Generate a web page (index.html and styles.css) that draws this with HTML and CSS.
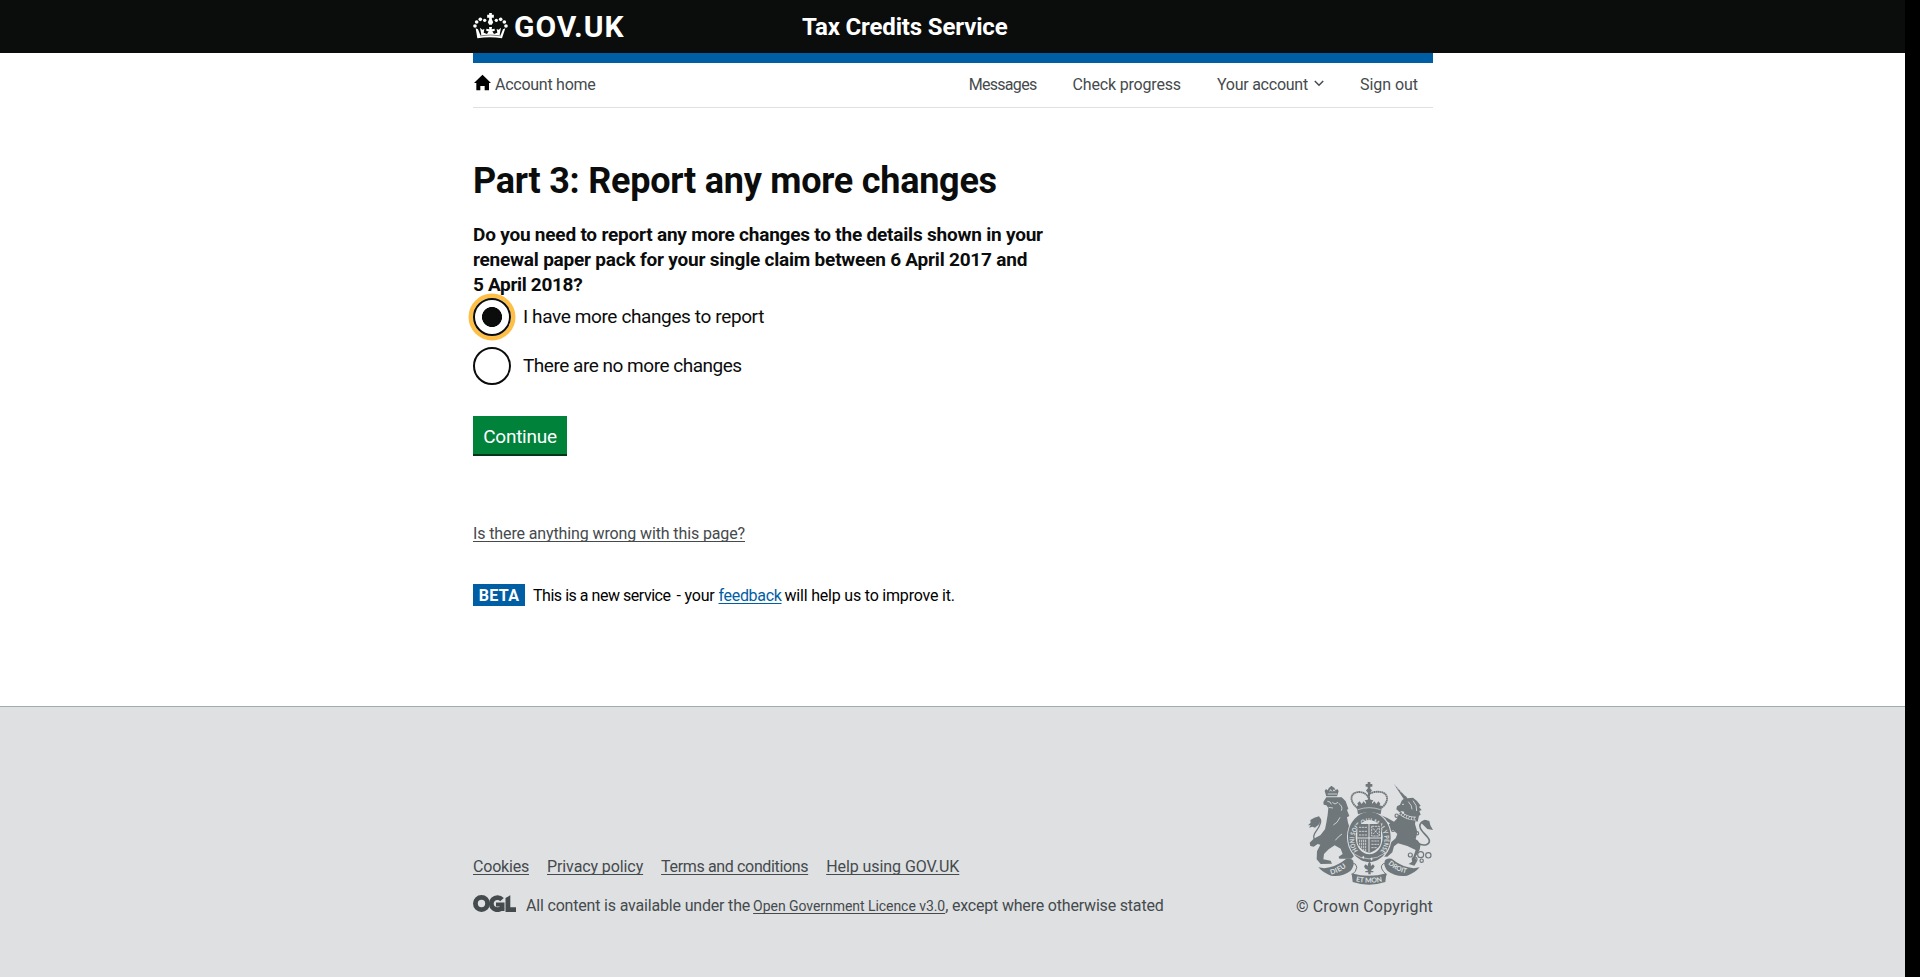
FILE: index.html
```html
<!DOCTYPE html>
<html lang="en">
<head>
<meta charset="utf-8">
<title>Report any more changes - Tax Credits Service - GOV.UK</title>
<link rel="stylesheet" href="styles.css">
</head>
<body>
<div class="page">
  <header class="header">
    <div class="wrap header-row">
      <a class="logo" href="#">
        <svg class="crown" viewBox="39 36 105 84" fill="#fff">
          <circle cx="45" cy="78" r="5.500"/><circle cx="50" cy="66" r="5.500"/><circle cx="61" cy="58" r="5.500"/><circle cx="74" cy="61" r="5"/>
          <circle cx="138" cy="78" r="5.500"/><circle cx="133" cy="66" r="5.500"/><circle cx="122" cy="58" r="5.500"/><circle cx="109" cy="61" r="5"/>
          <path d="M87.500 39h8v5h6v9h-6v5l4 9-4 7h-8l-4-7 4-9v-5h-6v-9h6z"/>
          <path d="M47 85l7 3 7 17 3-1-4-21 7 6 6-2-2 11 10 4 5-8-7-1v-7l9 2-1-7h9l-1 7 9-2v7l-7 1 5 8 10-4-2-11 6 2 7-6-4 21 3 1 7-17 7-3-10 30c-25-4-49-4-74 0z"/>
          <path d="M60 107.500q31-5 63 0" fill="none" stroke="#0b0c0c" stroke-width="1.500"/>
        </svg>
        <span class="logo-text">GOV.UK</span>
      </a>
      <a class="service" href="#">Tax Credits Service</a>
    </div>
  </header>
  <div class="wrap bar"></div>
  <nav class="wrap nav">
    <a class="home" href="#">
      <svg class="home-icon" viewBox="42 222 51 51"><path d="M67.500 224L93 249h-6v22H74v-13H61v13H49v-22h-7z"/></svg>
      <span class="t-home">Account home</span>
    </a>
    <ul class="nav-list">
      <li class="t-messages">Messages</li>
      <li class="t-check">Check progress</li>
      <li class="account"><span class="t-account">Your account</span><svg class="chev" viewBox="0 0 10 7"><path d="M.8 1L5 5.300 9.200 1" fill="none" stroke="#454a4d" stroke-width="1.500"/></svg></li>
      <li class="t-sign">Sign out</li>
    </ul>
  </nav>
  <main class="wrap main">
    <h1>Part 3: Report any more changes</h1>
    <p class="question">Do you need to report any more changes to the details shown in your<br>renewal paper pack for your single claim between 6 April 2017 and<br><span class="t-year">5 April 2018?</span></p>
    <label class="choice"><span class="radio selected"></span><span class="t-more">I have more changes to report</span></label>
    <label class="choice"><span class="radio"></span><span class="t-none">There are no more changes</span></label>
    <button class="button">Continue</button>
    <div class="problem"><a class="link" href="#">Is there anything wrong with this page?</a></div>
    <div class="phase"><strong class="tag">BETA</strong><span class="t-new">This is a new service</span><span class="t-your">- your</span><a class="link feedback" href="#">feedback</a><span class="t-help">will help us to improve it.</span></div>
  </main>
  <footer class="footer">
    <div class="wrap footer-row">
      <div class="meta">
        <ul class="links">
          <li><a class="link t-cookies" href="#">Cookies</a></li>
          <li><a class="link t-privacy" href="#">Privacy policy</a></li>
          <li><a class="link t-terms" href="#">Terms and conditions</a></li>
          <li><a class="link t-using" href="#">Help using GOV.UK</a></li>
        </ul>
        <div class="licence">
          <svg class="ogl" viewBox="0 0 43 17"><g fill="none" stroke="#454a4d" stroke-width="4.800"><circle cx="8.500" cy="8.500" r="6.100"/><path d="M29 4.600A6.100 6.100 0 1 0 29.500 12"/></g><path d="M23 7.500h8.500V16H28l-1-4.500h-4zM32.500 3L37.300.3V12.300H43V17H32.500z" fill="#454a4d"/></svg>
          <span class="t-content">All content is available under the</span>
          <a class="link small" href="#">Open Government Licence v3.0</a><span class="t-except">, except where otherwise stated</span>
        </div>
      </div>
      <div class="copyright">
        <svg class="arms" viewBox="84 33 375 315" fill="#6f777b">
          <defs>
            <path id="garter" d="M234 242A45 50 0 1 1 302 242"/>
            <path id="scroll-left" d="M153 314Q183 307 206 284"/>
            <path id="scroll-mid" d="M227 334Q267 343 309 334"/>
            <path id="scroll-right" d="M324 282Q350 306 386 311"/>
          </defs>
          <!-- lion -->
          <path d="M139 79l-5-16 4-6 5 4 4-8 5-3v-2h5v2l6 3 4 8 5-4 4 6-5 16z"/>
          <path d="M143 72h28M149 64l3-5 3 5M159 64l3-5 3 5" fill="none" stroke="#dee0e2" stroke-width="2.500"/>
          <path d="M119 219C98 208 97 200 108 184C122 165 127 148 116 145L107 149" fill="none" stroke="#6f777b" stroke-width="4"/>
          <path d="M84 166l8-8-1-8 12-7 14-4 6 9-5 14-13 11-8-3-10 3 5-7z"/>
          <path d="M139 82h46l12 12 8 22-4 4 7 18-7 4 3 16 4 12 14 6 10 10-4 14-12-6-10-6-4 10 2 14 8 16 4 18 6 12-8 8h-36l-2-6 12-8-6-16-18-10-18 12-14 14-2 16 22 4 4 9-34 1-12-14 1-24 10-20-8-2-12 8-10-2-2-10 12-12 20-10 14-18 4-20 4-24 2-20-6-8-8-2-1-8 6-10z"/>
          <path d="M142 94l8 2 4 7M157 97l8 5 9-5M146 112l13 2M176 100q14 10 8 22M180 142q-8 18-20 23M186 192q-13 9-20 19" fill="none" stroke="#dee0e2" stroke-width="2.500"/>
          <!-- unicorn -->
          <path d="M341 41L379 82l-8 5z"/>
          <path d="M344 45l4 6M352 54l4 5M360 63l4 5" stroke="#dee0e2" stroke-width="1.500"/>
          <path d="M349 118l2-9 9-5 5-12 8-7 4-8 5 8 17-2 12 10 11 14-5 4 8 9-7 3 4 11-5 3-4 18-45-15 5-15-7-1-7 3z"/>
          <path d="M366 103h6M385 95q12 13 11 23M399 92q13 14 11 31" fill="none" stroke="#dee0e2" stroke-width="2.500"/>
          <path d="M359 133l48 17-2 12 7 24-5 21 15 15-3 17-13 23 4 14-7 11-17-5 10-7 5-18 6-17-25-12-28-8-12 9-5 18-15 13-18-1 7-8 12-5 7-26 17-15 5-13-12-12-17 2-16 8-8 19-12 2 2-10 8-4 5-19 20-11 8-7-16-10-15-2-8-7 12-5 19 8 20 11 8-8z"/>
          <path d="M360 128q20 18 48 18" fill="none" stroke="#dee0e2" stroke-width="11"/>
          <path d="M360 128q20 18 48 18" fill="none" stroke="#6f777b" stroke-width="7" stroke-dasharray="6 2"/>
          <path d="M412 220C435 231 453 222 447 208C440 193 414 180 420 164Q427 151 440 153" fill="none" stroke="#6f777b" stroke-width="5"/>
          <path d="M424 160l10-11 14 4 3 13 8 14-17-3-12-12z"/>
          <g fill="none" stroke="#6f777b" stroke-width="3.500"><circle cx="391" cy="255" r="6"/><circle cx="404" cy="268" r="7"/><circle cx="422" cy="254" r="9"/><circle cx="445" cy="256" r="8"/><circle cx="425" cy="272" r="5"/><circle cx="350" cy="137" r="5"/><circle cx="339" cy="178" r="6"/><circle cx="411" cy="190" r="5"/><circle cx="408" cy="218" r="6"/></g>
          <!-- garter and shield -->
          <ellipse cx="268" cy="201" rx="67" ry="78" fill="#dee0e2"/>
          <path fill-rule="evenodd" d="M268 126C301 126 332 157 332 200S301 276 268 276 204 243 204 200 235 126 268 126zM268 150C248 150 227 171 227 201S246 253 268 253 308 231 308 201 288 150 268 150z"/>
          <g class="arms-text"><text font-size="20" textLength="222" lengthAdjust="spacingAndGlyphs"><textPath href="#garter">HONI SOIT QUI MAL Y PENSE</textPath></text></g>
          <path d="M232 162h71v51c0 20-21 31-35 36-15-5-36-16-36-36z"/>
          <path d="M267 162v86M232 204h71" stroke="#dee0e2" stroke-width="3"/>
          <path d="M237 172h24M237 184h24M237 195h24M275 169h23v29h-23zM279 175l16 18M295 174l-15 18M239 209v24M245 209v29M251 209v33M257 209v36M274 213h23M274 223h23M274 233h17" fill="none" stroke="#dee0e2" stroke-width="2.500" stroke-dasharray="7 2"/>
          <path d="M219 250q48 34 98-2" fill="none" stroke="#dee0e2" stroke-width="2"/>
          <path d="M250 257l3 5-3 5-4-5zM275 262l3 5-3 5-4-5z" fill="#dee0e2"/>
          <!-- crown -->
          <path d="M263 36h8v6h6v8h-6v6l5 5-5 7h-8l-5-7 5-5v-6h-6v-8h6z"/>
          <path d="M232 114C204 91 212 66 238 66Q256 67 263 79Q269 68 284 66C330 60 329 96 304 114" fill="none" stroke="#6f777b" stroke-width="5.500" stroke-dasharray="5 1"/>
          <path d="M267 67v35" fill="none" stroke="#6f777b" stroke-width="6" stroke-dasharray="5 1"/>
          <path d="M230 108q38-13 76 0l-4 25q-34-12-68 0z"/>
          <path d="M234 119q33-12 68 0" fill="none" stroke="#dee0e2" stroke-width="2"/>
          <path d="M236 109l-4-9 7-6 6 8 6-8 6 8-4 8zM256 107l2-10-4-6 9-2 4-8 5 8 8 2-4 6 2 10zM281 109l-4-8 6-7 6 8 6-8 6 7-5 9z"/>
          <!-- scroll -->
          <path d="M115 292q19 5 34 0 28-8 50-26 16-3 21 8 4 15-9 29-25 19-58 14-23-8-38-25z"/>
          <path d="M419 292q-18 5-34 0-28-8-50-26-17-3-21 8-4 15 9 29 25 19 58 14 24-8 38-25z"/>
          <path d="M205 291q10-14 21-9 9 8 0 22l-10 10 9 16q42 12 85 0l9-16-9-10q-12-15 0-23 11-4 21 8" fill="none" stroke="#6f777b" stroke-width="3"/>
          <path d="M215 310q52 15 104 0l-3 26q-49 16-98 0z"/>
          <path d="M265 279l3-4 4 4 1 9 6-5 5 6-5 8-5 2v4h6v4h-8v6h-7v-6h-9v-4h7v-4l-7-3-4-7 5-6 6 5z"/>
          <g class="arms-text"><text font-size="21" textLength="52"><textPath href="#scroll-left">DIEU</textPath></text><text font-size="21" textLength="81"><textPath href="#scroll-mid">ET MON</textPath></text><text font-size="20" textLength="62"><textPath href="#scroll-right">DROIT</textPath></text></g>
        </svg>
        <span class="t-copy">© Crown Copyright</span>
      </div>
    </div>
  </footer>
</div>
</body>
</html>
```
FILE: styles.css
```css
body { margin: 0; background: #000; font: 16px/20px Roboto, sans-serif; color: #0b0c0c; }
a { color: inherit; text-decoration: none; }
ul { margin: 0; padding: 0; list-style: none; display: flex; }
svg { display: block; flex: none; }
.page { width: 1905px; height: 977px; background: #fff; overflow: hidden; display: flex; flex-direction: column; }
.wrap { box-sizing: border-box; width: 960px; margin: 0 0 0 473px; white-space: nowrap; }

.header { background: #0b0c0c; height: 53px; flex: none; color: #fff; }
.header-row { display: grid; grid-template-columns: 329px 1fr; align-items: center; height: 53px; }
.logo { display: flex; align-items: center; gap: 6px; }
.crown { width: 35px; height: 28px; margin-top: -1px; }
.logo-text { font-size: 30px; font-weight: 700; line-height: 53px; letter-spacing: .95px; }
.service { font-size: 24px; font-weight: 700; letter-spacing: -.15px; }
.bar { height: 10px; background: #005ea5; flex: none; }

.nav { display: flex; justify-content: space-between; align-items: center; height: 45px; padding-bottom: 1px; border-bottom: 1px solid #dee0e2; color: #454a4d; flex: none; }
.home { display: flex; align-items: center; gap: 4px; padding-left: 1px; }
.home-icon { width: 17px; height: 17px; fill: #000; margin-top: -4px; }
.nav-list { gap: 36px; padding-right: 15px; }
.account { display: flex; align-items: center; gap: 6px; }
.chev { width: 10px; height: 7px; margin-top: -3px; }
.t-home { letter-spacing: -.26px; }
.t-messages { letter-spacing: -.7px; }
.t-check { letter-spacing: -.17px; }
.t-account { letter-spacing: -.24px; }
.t-sign { letter-spacing: -.04px; }

.main { padding-top: 53px; flex: 1; }
h1 { font-size: 36px; line-height: 40px; margin: 0 0 21px; letter-spacing: -.25px; }
.question { font-size: 19px; font-weight: 700; line-height: 25px; margin: 0 0 1px; letter-spacing: -.21px; }
.t-year { letter-spacing: -.33px; }
.choice { display: flex; align-items: center; gap: 12px; height: 38px; font-size: 19px; margin-bottom: 11px; }
.radio { box-sizing: border-box; width: 38px; height: 38px; border: 2px solid #0b0c0c; border-radius: 50%; }
.selected { background: radial-gradient(circle, #0b0c0c 9.700px, transparent 10.300px); box-shadow: 0 0 0 4.500px #ffbf47; }
.t-more { letter-spacing: -.38px; }
.t-none { letter-spacing: -.48px; }
.button { display: block; width: 94px; height: 38px; margin: 31px 0 0; padding: 3px 0 0; border: 0; background: #00823b; box-shadow: 0 2px 0 #003618; color: #fff; font: 19px/25px Roboto, sans-serif; letter-spacing: -.25px; }
.link { text-decoration: underline; text-decoration-thickness: 1px; text-underline-offset: 2px; text-decoration-skip-ink: none; }
.problem { margin-top: 70px; color: #454a4d; letter-spacing: -.12px; }
.phase { display: flex; align-items: center; margin-top: 40px; height: 22px; color: #000; }
.phase > :not(.tag) { padding-top: 1px; }
.tag { width: 52px; height: 22px; line-height: 23px; background: #005ea5; color: #fff; text-align: center; letter-spacing: .35px; margin-right: 8px; }
.t-new { letter-spacing: -.47px; margin-right: 6px; }
.t-your { letter-spacing: -.2px; margin-right: 4px; }
.feedback { color: #005ea5; letter-spacing: -.32px; margin-right: 3px; }
.t-help { letter-spacing: -.2px; }

.footer { box-sizing: border-box; height: 271px; flex: none; background: #dee0e2; border-top: 1px solid #a1acb2; color: #454a4d; }
.footer-row { display: flex; justify-content: space-between; padding-top: 74px; }
.links { gap: 18px; margin: 76px 0 18px; }
.licence { display: flex; align-items: center; }
.ogl { width: 43px; height: 17px; margin: -4px 10px 0 0; }
.small { font-size: 14px; margin-left: 3px; letter-spacing: -.05px; padding-top: 1px; }
.t-cookies { letter-spacing: -.2px; }
.t-privacy { letter-spacing: -.1px; }
.t-terms { letter-spacing: -.35px; }
.t-using { letter-spacing: -.07px; }
.t-content { letter-spacing: -.18px; }
.t-except { letter-spacing: -.19px; }
.copyright { display: flex; flex-direction: column; align-items: flex-end; gap: 11px; }
.arms { width: 125px; height: 105px; }
.arms-text { fill: #dee0e2; font-family: Lato, sans-serif; font-weight: 700; }
.t-copy { letter-spacing: .15px; }
```
